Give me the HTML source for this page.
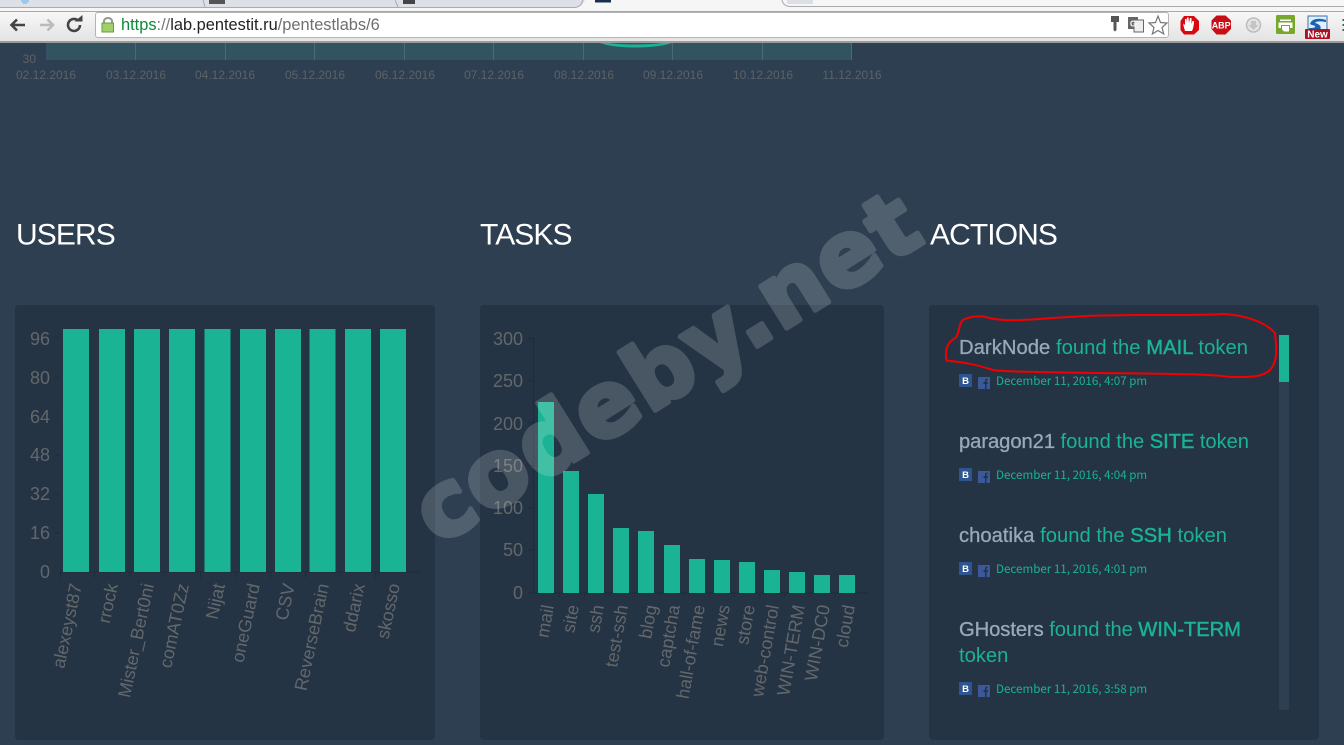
<!DOCTYPE html>
<html><head><meta charset="utf-8"><style>
html,body{margin:0;padding:0;width:1344px;height:745px;overflow:hidden;background:#2e3f51}
svg{display:block;font-family:"Liberation Sans",sans-serif}
.g{fill:#63676b;font-size:18px}
.s{fill:#5c6268;font-size:12px}
.h{fill:#fff;font-size:30px;letter-spacing:-.9px}
.a{font-size:20.2px;fill:#1ab394}
.n{fill:#98a9bc;stroke:#98a9bc;stroke-width:.3}
.b{stroke:#1ab394;stroke-width:.45}
.d{font-family:"Noto Sans CJK SC",sans-serif;font-size:11.6px;fill:#1ab394}
</style></head><body>
<svg width="1344" height="745" viewBox="0 0 1344 745" xmlns="http://www.w3.org/2000/svg">
<defs><linearGradient id="tb" x1="0" y1="0" x2="0" y2="1"><stop offset="0" stop-color="#f8f8f8"/><stop offset="1" stop-color="#e2e2e2"/></linearGradient></defs>
<rect width="1344" height="745" fill="#2e3f51"/>

<!-- top chart -->
<rect x="46" y="43" width="806" height="17" fill="#315460"/>
<g stroke="#4a6a74" stroke-width="1"><path d="M135.500 43V60M225.500 43V60M314.500 43V60M404.500 43V60M493.500 43V60M583.500 43V60M672.500 43V60M762.500 43V60M851.500 43V60"/></g>
<path d="M600 43C615 49 655 49 672 43Z" fill="#1ab394"/><path d="M609 43C622 45 648 45 662 43Z" fill="#315460"/>
<text class="s" x="36" y="63" text-anchor="end">30</text>
<g class="s" text-anchor="middle">
<text x="46" y="79">02.12.2016</text><text x="136" y="79">03.12.2016</text><text x="225" y="79">04.12.2016</text><text x="315" y="79">05.12.2016</text><text x="405" y="79">06.12.2016</text><text x="494" y="79">07.12.2016</text><text x="584" y="79">08.12.2016</text><text x="673" y="79">09.12.2016</text><text x="763" y="79">10.12.2016</text><text x="852" y="79">11.12.2016</text>
</g>

<!-- headers -->
<text class="h" x="16" y="244.500">USERS</text>
<text class="h" x="480" y="244.500">TASKS</text>
<text class="h" x="930" y="244.500">ACTIONS</text>

<!-- panels -->
<rect x="15" y="305" width="420" height="435" rx="4" fill="#243444"/>
<rect x="480" y="305" width="404" height="435" rx="4" fill="#243444"/>
<rect x="929" y="305" width="390" height="435" rx="4" fill="#243444"/>

<!-- users chart -->
<path d="M60.500 572H420M60.500 572V578M94.500 572V578M130 572V578M165 572V578M200.500 572V578M235.500 572V578M271 572V578M305.500 572V578M341 572V578M375.500 572V578M55 338H60M55 378H60M55 416H60M55 455H60M55 494H60M55 533H60" stroke="#1d2b3a" fill="none"/>
<g fill="#1ab394">
<rect x="63" y="329" width="26" height="243"/><rect x="99" y="329" width="26" height="243"/><rect x="134" y="329" width="26" height="243"/><rect x="169" y="329" width="26" height="243"/><rect x="204.500" y="329" width="26" height="243"/><rect x="240" y="329" width="26" height="243"/><rect x="275" y="329" width="26" height="243"/><rect x="309.500" y="329" width="26" height="243"/><rect x="345" y="329" width="26" height="243"/><rect x="380" y="329" width="26" height="243"/>
</g>
<g class="g" text-anchor="end">
<text x="50" y="345">96</text><text x="50" y="384">80</text><text x="50" y="423">64</text><text x="50" y="461">48</text><text x="50" y="500">32</text><text x="50" y="539">16</text><text x="50" y="578">0</text>
<text transform="translate(82 585) rotate(-78)">alexeyst87</text>
<text transform="translate(118 585) rotate(-78)">rrock</text>
<text transform="translate(154 585) rotate(-78)">Mister_Bert0ni</text>
<text transform="translate(189 585) rotate(-78)">comAT0Zz</text>
<text transform="translate(225 585) rotate(-78)">Nijat</text>
<text transform="translate(260 585) rotate(-78)">oneGuard</text>
<text transform="translate(295 585) rotate(-78)">CSV</text>
<text transform="translate(329 585) rotate(-78)">ReverseBrain</text>
<text transform="translate(365 585) rotate(-78)">ddarix</text>
<text transform="translate(400 585) rotate(-78)">skosso</text>
</g>

<!-- tasks chart -->
<path d="M533.500 337V593M528 593H868M528 338.500H533M528 381H533M528 423H533M528 465.500H533M528 508H533M528 550H533M559.500 593V597M584.500 593V597M609.500 593V597M634.500 593V597M659.500 593V597M684.500 593V597M709.500 593V597M734.500 593V597M760 593V597M785 593V597M810 593V597M835 593V597" stroke="#1d2b3a" fill="none"/>
<g fill="#1ab394">
<rect x="538" y="402" width="16" height="191"/><rect x="563" y="471" width="16" height="122"/><rect x="588" y="494" width="16" height="99"/><rect x="613" y="528" width="16" height="65"/><rect x="638" y="531" width="16" height="62"/><rect x="664" y="545" width="16" height="48"/><rect x="689" y="559" width="16" height="34"/><rect x="714" y="560" width="16" height="33"/><rect x="739" y="562" width="16" height="31"/><rect x="764" y="570" width="16" height="23"/><rect x="789" y="572" width="16" height="21"/><rect x="814" y="575" width="16" height="18"/><rect x="839" y="575" width="16" height="18"/>
</g>
<g class="g" text-anchor="end">
<text x="523" y="345">300</text><text x="523" y="387">250</text><text x="523" y="430">200</text><text x="523" y="472">150</text><text x="523" y="514">100</text><text x="523" y="556">50</text><text x="523" y="599">0</text>
<text transform="translate(554 606) rotate(-80)">mail</text>
<text transform="translate(579 606) rotate(-80)">site</text>
<text transform="translate(604 606) rotate(-80)">ssh</text>
<text transform="translate(628 606) rotate(-80)">test-ssh</text>
<text transform="translate(657 606) rotate(-80)">blog</text>
<text transform="translate(680 606) rotate(-80)">captcha</text>
<text transform="translate(705 606) rotate(-80)">hall-of-fame</text>
<text transform="translate(730 606) rotate(-80)">news</text>
<text transform="translate(755 606) rotate(-80)">store</text>
<text transform="translate(779 606) rotate(-80)">web-control</text>
<text transform="translate(805 606) rotate(-80)">WIN-TERM</text>
<text transform="translate(830 606) rotate(-80)">WIN-DC0</text>
<text transform="translate(855 606) rotate(-80)">cloud</text>
</g>

<!-- actions -->
<rect x="1279" y="335" width="10" height="375" fill="#2e3f51"/>
<rect x="1279" y="335" width="10" height="47" fill="#1ab394"/>
<text class="a" x="959" y="354" textLength="289"><tspan class="n">DarkNode</tspan> found the <tspan class="b">MAIL</tspan> token</text>
<text class="a" x="959" y="448" textLength="290"><tspan class="n">paragon21</tspan> found the <tspan class="b">SITE</tspan> token</text>
<text class="a" x="959" y="542" textLength="268"><tspan class="n">choatika</tspan> found the <tspan class="b">SSH</tspan> token</text>
<text class="a" x="959" y="636" textLength="282"><tspan class="n">GHosters</tspan> found the <tspan class="b">WIN-TERM</tspan></text>
<text class="a" x="959" y="662">token</text>
<text class="d" x="996" y="385">December 11, 2016, 4:07 pm</text>
<text class="d" x="996" y="479">December 11, 2016, 4:04 pm</text>
<text class="d" x="996" y="573">December 11, 2016, 4:01 pm</text>
<text class="d" x="996" y="693">December 11, 2016, 3:58 pm</text>
<g>
<rect x="959" y="374" width="13" height="13" fill="#2f5590"/><text x="965.500" y="384" text-anchor="middle" font-size="9.500" font-weight="700" fill="#fff">B</text>
<rect x="978" y="377" width="12" height="12" fill="#3b5998"/><path d="M985 389v-5h-1.500v-2H985v-1.500c0-1.300 1-2 2.500-2v1.800c-.7 0-1 .2-1 .8V382h1.500l-.3 2h-1.200v5z" fill="#243444"/>
</g>
<g transform="translate(0 94)"><rect x="959" y="374" width="13" height="13" fill="#2f5590"/><text x="965.500" y="384" text-anchor="middle" font-size="9.500" font-weight="700" fill="#fff">B</text><rect x="978" y="377" width="12" height="12" fill="#3b5998"/><path d="M985 389v-5h-1.500v-2H985v-1.500c0-1.300 1-2 2.500-2v1.800c-.7 0-1 .2-1 .8V382h1.500l-.3 2h-1.200v5z" fill="#243444"/></g>
<g transform="translate(0 188)"><rect x="959" y="374" width="13" height="13" fill="#2f5590"/><text x="965.500" y="384" text-anchor="middle" font-size="9.500" font-weight="700" fill="#fff">B</text><rect x="978" y="377" width="12" height="12" fill="#3b5998"/><path d="M985 389v-5h-1.500v-2H985v-1.500c0-1.300 1-2 2.500-2v1.800c-.7 0-1 .2-1 .8V382h1.500l-.3 2h-1.200v5z" fill="#243444"/></g>
<g transform="translate(0 308)"><rect x="959" y="374" width="13" height="13" fill="#2f5590"/><text x="965.500" y="384" text-anchor="middle" font-size="9.500" font-weight="700" fill="#fff">B</text><rect x="978" y="377" width="12" height="12" fill="#3b5998"/><path d="M985 389v-5h-1.500v-2H985v-1.500c0-1.300 1-2 2.500-2v1.800c-.7 0-1 .2-1 .8V382h1.500l-.3 2h-1.200v5z" fill="#243444"/></g>

<!-- red scribble -->
<path d="M946.500 360.500C945 352 946 343 955 338.500C960 334 958 324 963 320C972 315 985 316 989 318C1010 323 1040 318 1087 316C1140 314 1200 316 1223 314C1250 315 1268 325 1275 333C1276 345 1279 360 1270 370C1262 378 1245 377 1230 377C1210 374 1180 374 1100 373C1040 372 1010 372 993 370C975 364 960 362 946.500 360.500Z" fill="none" stroke="#f00000" stroke-width="2"/>

<!-- watermark -->
<text x="0" y="0" transform="translate(438 546) rotate(-32)" font-family="'DejaVu Sans',sans-serif" font-weight="700" font-size="90" letter-spacing="2" fill="#fff" stroke="#fff" stroke-width="5" stroke-linejoin="round" opacity=".17">codeby.net</text>

<!-- browser chrome -->
<rect x="0" y="0" width="1344" height="11" fill="#f6f6f6"/>
<path d="M0 0H585L582 5Q580 7 575 7H0Z" fill="#dde0e6"/>
<path d="M0 7.500H575Q581 7 583 0" fill="none" stroke="#a9abb0"/>
<path d="M203 0L205 7M395 0L398 7" stroke="#a9abb0" fill="none"/>
<circle cx="25" cy="0" r="4" fill="#9cc6ec"/>
<rect x="209" y="0" width="16" height="4" fill="#555"/>
<rect x="403" y="0" width="12" height="4" fill="#444"/>
<rect x="595" y="0" width="16" height="2.500" fill="#18304d"/>
<path d="M782 0Q783 6 790 6.500H1344" fill="none" stroke="#a9abb0"/><rect x="787" y="0" width="26" height="4" fill="#dcdfe4"/>
<rect x="0" y="11" width="1344" height="32" fill="url(#tb)"/>
<rect x="0" y="11" width="1344" height="1" fill="#a8a8a8"/>
<rect x="0" y="41" width="1344" height="2" fill="#9b9b9b"/>
<rect x="95.500" y="12.500" width="1073" height="25" rx="2.500" fill="#fff" stroke="#b4b4b4"/>
<path d="M25 25H12M17 19.500L11.500 25L17 30.500" fill="none" stroke="#444" stroke-width="2.600"/>
<path d="M53 25H40M47.500 19.500L53 25L47.500 30.500" fill="none" stroke="#bbb" stroke-width="2.600"/>
<path d="M80 25A6 6 0 1 1 78 20.500" fill="none" stroke="#444" stroke-width="2.600"/><path d="M74.500 21.500H82.500V15Z" fill="#444"/>
<path d="M104 23V20.500A4.500 4.500 0 0 1 112 20.500V23" fill="none" stroke="#999" stroke-width="2"/>
<rect x="102" y="23" width="11.500" height="9" fill="#9fd06a" stroke="#6a9c3a"/>
<text x="121" y="30" font-size="16.400"><tspan fill="#0a8a3a">https</tspan><tspan fill="#777">://</tspan><tspan fill="#222">lab.pentestit.ru</tspan><tspan fill="#6f6f6f">/pentestlabs/6</tspan></text>
<path d="M1111 16H1119V22H1116.500V30L1115 31.500L1113.500 30V22H1111Z" fill="#555"/>
<rect x="1128" y="17" width="10" height="12" fill="#666"/><rect x="1134" y="20" width="9.500" height="12" fill="#eee" stroke="#666"/>
<text x="1130" y="26.500" font-size="8" font-weight="700" fill="#fff">G</text>
<path d="M1158 16L1160.500 22.500L1167 23L1162 27.500L1163.700 34L1158 30.500L1152.300 34L1154 27.500L1149 23L1155.500 22.500Z" fill="#fff" stroke="#777" stroke-width="1.200"/>
<path d="M1184 16H1194L1199 21V30L1194 34.500H1184L1180.500 30V21Z" fill="#d9080f"/>
<path d="M1185 31C1184 27 1183 25 1183.500 23.500L1185 25V19L1186.500 19V23L1187 17.500H1188.500L1189 23L1190 18H1191.500V24L1192.500 21H1194C1194 25 1193 29 1192 31Z" fill="#fff"/>
<path d="M1216.500 15.500H1225.500L1231 20.500V29L1225.500 34.500H1216.500L1211.500 29V20.500Z" fill="#c70d16"/>
<text x="1221.200" y="28.500" text-anchor="middle" font-size="9" font-weight="700" fill="#fff">ABP</text>
<circle cx="1253.500" cy="25" r="7" fill="#e4e4e4" stroke="#bdbdbd" stroke-width="1.500"/><path d="M1251 21H1256V25H1258.500L1253.500 30L1248.500 25H1251Z" fill="#c4c4c4"/>
<rect x="1276" y="15" width="19" height="19" rx="1.500" fill="#76a82c"/>
<path d="M1280 19.500H1291V21H1280ZM1278.500 22.500H1292.500V28H1290V25H1281V28H1278.500ZM1282 26H1289V31.500H1284L1282 29.500Z" fill="#fff"/>
<rect x="1308" y="16" width="19" height="15" fill="#dff0fa" stroke="#3a70b0"/><path d="M1310 24C1312 18 1320 18 1326 20V22C1320 21 1316 21 1315 23C1319 24 1322 26 1320 30H1309V28C1312 28 1316 28 1315 26C1313 25 1311 25 1310 24Z" fill="#1b62b0"/>
<rect x="1305" y="29" width="25" height="10" rx="1" fill="#b01020"/>
<text x="1317.500" y="37.500" text-anchor="middle" font-size="10" font-weight="700" fill="#fff">New</text>
<path d="M1342.500 20H1344M1342.500 25H1344M1342.500 30H1344" stroke="#555" stroke-width="2"/>
</svg>
</body></html>
